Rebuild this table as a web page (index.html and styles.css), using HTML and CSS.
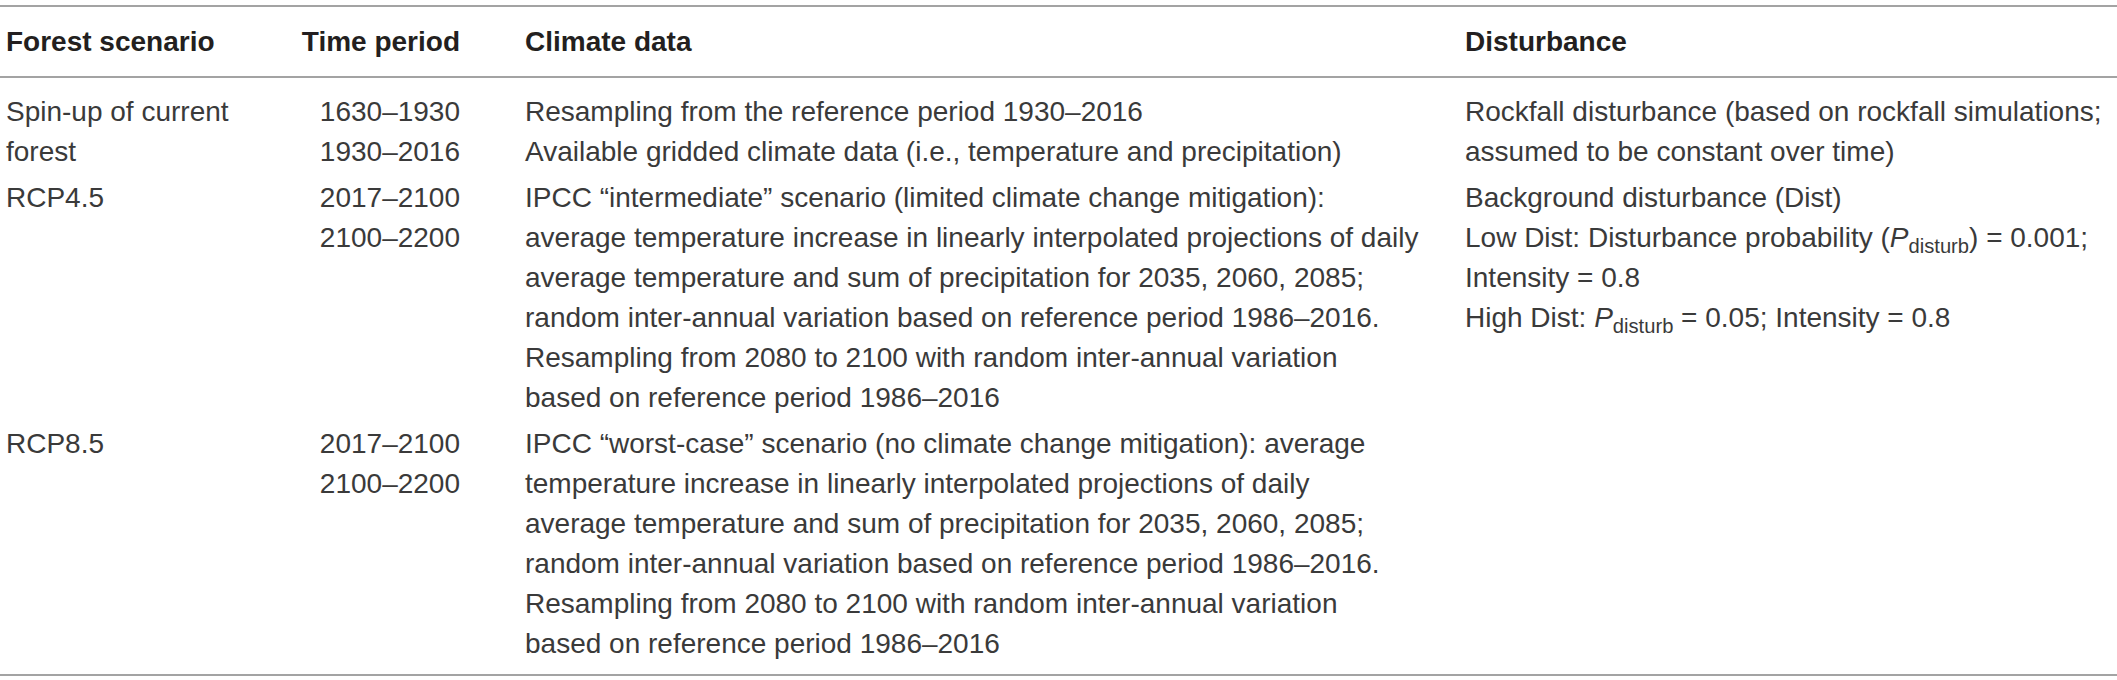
FILE: index.html
```html
<!DOCTYPE html>
<html lang="en">
<head>
  <meta charset="UTF-8" />
  <meta name="viewport" content="width=device-width, initial-scale=1.0" />
  <title>Forest scenarios</title>
  <link rel="stylesheet" href="styles.css">
</head>
<body>
  <div class="sheet">
    <table class="scenarios">
      <colgroup>
        <col class="c-scenario">
        <col class="c-period">
        <col class="c-climate">
        <col class="c-dist">
      </colgroup>
      <thead>
        <tr>
          <th>Forest scenario</th>
          <th class="period">Time period</th>
          <th>Climate data</th>
          <th>Disturbance</th>
        </tr>
      </thead>
      <tbody>
        <tr>
          <td>Spin-up of current<br>forest</td>
          <td class="period">1630–1930<br>1930–2016</td>
          <td>Resampling from the reference period 1930–2016<br>Available gridded climate data (i.e., temperature and precipitation)</td>
          <td>Rockfall disturbance (based on rockfall simulations;<br>assumed to be constant over time)</td>
        </tr>
        <tr>
          <td>RCP4.5</td>
          <td class="period">2017–2100<br>2100–2200</td>
          <td>IPCC “intermediate” scenario (limited climate change mitigation):<br>average temperature increase in linearly interpolated projections of daily<br>average temperature and sum of precipitation for 2035, 2060, 2085;<br>random inter-annual variation based on reference period 1986–2016.<br>Resampling from 2080 to 2100 with random inter-annual variation<br>based on reference period 1986–2016</td>
          <td>Background disturbance (Dist)<br>Low Dist: Disturbance probability (<i>P</i><sub>disturb</sub>) = 0.001;<br>Intensity = 0.8<br>High Dist: <i>P</i><sub>disturb</sub> = 0.05; Intensity = 0.8</td>
        </tr>
        <tr>
          <td>RCP8.5</td>
          <td class="period">2017–2100<br>2100–2200</td>
          <td>IPCC “worst-case” scenario (no climate change mitigation): average<br>temperature increase in linearly interpolated projections of daily<br>average temperature and sum of precipitation for 2035, 2060, 2085;<br>random inter-annual variation based on reference period 1986–2016.<br>Resampling from 2080 to 2100 with random inter-annual variation<br>based on reference period 1986–2016</td>
          <td></td>
        </tr>
      </tbody>
    </table>
  </div>
</body>
</html>
```

FILE: styles.css
```css
body {
  margin: 0;
  background: #fff;
}

.sheet {
  padding-top: 5px;
}

.scenarios {
  width: 100%;
  table-layout: fixed;
  border-collapse: collapse;
  font-family: "Liberation Sans", Arial, sans-serif;
  font-size: 28px;
  line-height: 40px;
  color: #3a3a3a;
  border-top: 2px solid #a3a3a3;
  border-bottom: 2px solid #a3a3a3;
}

.c-scenario { width: 290px; }
.c-period { width: 229px; }
.c-climate { width: 940px; }
.c-dist { width: 658px; }

.scenarios th {
  text-align: left;
  font-weight: bold;
  color: #231f20;
  padding: 15px 6px 14px;
  border-bottom: 2px solid #a3a3a3;
  white-space: nowrap;
}

.scenarios td {
  vertical-align: top;
  padding: 3px 6px;
  white-space: nowrap;
}

.scenarios tbody tr:first-child td {
  padding-top: 14px;
}

.scenarios tbody tr:last-child td {
  padding-bottom: 10px;
}

.scenarios .period {
  text-align: right;
  padding-right: 59px;
}

.scenarios sub {
  font-size: 0.72em;
  line-height: 0;
  vertical-align: -0.28em;
}
```
